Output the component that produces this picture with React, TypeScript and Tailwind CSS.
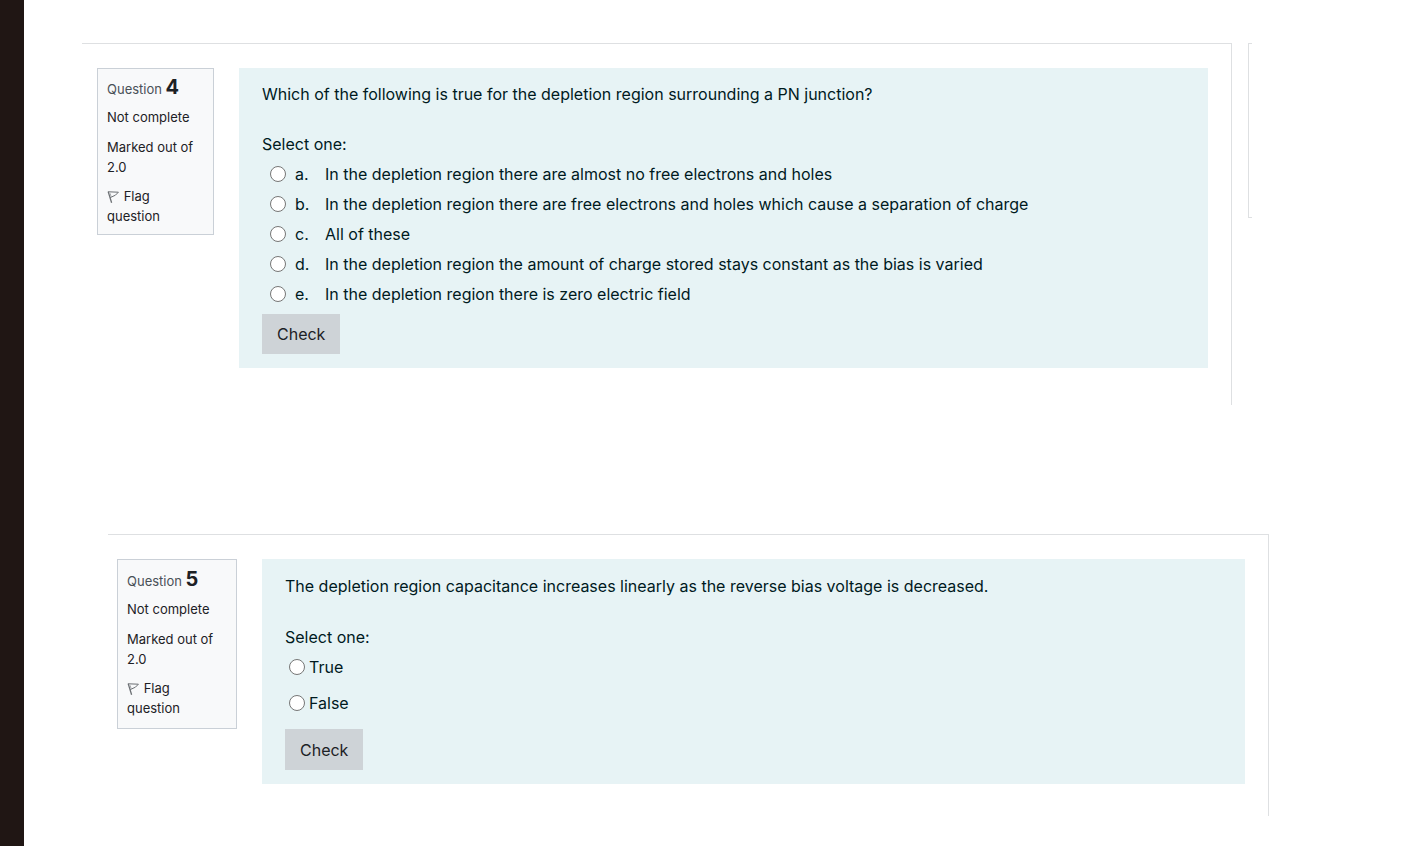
import React from "react";

type Option = { value: string; letter?: string; text: string };

type Question = {
  number: number;
  prompt: string;
  options: Option[];
};

const depletionQuestion: Question = {
  number: 4,
  prompt:
    "Which of the following is true for the depletion region surrounding a PN junction?",
  options: [
    {
      value: "a",
      letter: "a.",
      text: "In the depletion region there are almost no free electrons and holes",
    },
    {
      value: "b",
      letter: "b.",
      text: "In the depletion region there are free electrons and holes which cause a separation of charge",
    },
    { value: "c", letter: "c.", text: "All of these" },
    {
      value: "d",
      letter: "d.",
      text: "In the depletion region the amount of charge stored stays constant as the bias is varied",
    },
    {
      value: "e",
      letter: "e.",
      text: "In the depletion region there is zero electric field",
    },
  ],
};

const capacitanceQuestion: Question = {
  number: 5,
  prompt:
    "The depletion region capacitance increases linearly as the reverse bias voltage is decreased.",
  options: [
    { value: "true", text: "True" },
    { value: "false", text: "False" },
  ],
};

const FlagIcon: React.FC = () => (
  <svg
    viewBox="0 0 13 14"
    className="inline-block h-[14px] w-[13px] align-[-3px]"
    fill="none"
    stroke="#6b6f73"
    strokeLinejoin="round"
    aria-hidden="true"
  >
    <path d="M1.2 1.6 4.6 12.8" strokeWidth="1.3" />
    <path d="M1.2 1.8 11.4 2.2 8.4 5.2 3.2 7.6" strokeWidth="1" />
    <path d="M3 3.2 4.2 6.8" strokeWidth="0.9" stroke="#9a9da0" />
  </svg>
);

const InfoBox: React.FC<{ number: number; className: string }> = ({
  number,
  className,
}) => (
  <div
    className={`shrink-0 self-start border border-[#cad0d7] bg-[#f8f9fa] px-[9px] text-[13px] leading-5 text-[#1d2125] ${className}`}
  >
    <h3 className="leading-6 text-[#495057]">
      Question{" "}
      <span className="text-xl leading-6 font-bold text-[#1d2125]">
        {number}
      </span>
    </h3>
    <div className="mt-[6px]">Not complete</div>
    <div className="mt-[10px]">Marked out of 2.0</div>
    <a href="#flag" className="mt-[9px] block pr-3">
      <FlagIcon /> Flag question
    </a>
  </div>
);

const QuestionForm: React.FC<{ question: Question }> = ({ question }) => {
  const lettered = question.options.some((o) => o.letter);
  const name = `question-${question.number}`;

  return (
    <form
      className={[
        "min-w-0 flex-1 bg-[#e7f3f5] px-[23px] pb-[14px] text-base text-[#001a1e]",
        lettered ? "pt-3" : "pt-[13px]",
      ].join(" ")}
      onSubmit={(e) => e.preventDefault()}
    >
      <p className="leading-7">{question.prompt}</p>
      <fieldset className={lettered ? "mt-[21px]" : "mt-[22px]"}>
        <legend className="leading-[30px]">Select one:</legend>
        <div
          className={lettered ? "pl-2" : "flex flex-col gap-[6px] pl-1"}
        >
          {question.options.map((o) => (
            <label
              key={o.value}
              className={[
                "flex items-center leading-[30px]",
                lettered ? "gap-[9px]" : "gap-1",
              ].join(" ")}
            >
              <input
                type="radio"
                name={name}
                value={o.value}
                className="size-4 shrink-0 appearance-none rounded-full border border-[#767676] bg-white checked:border-4 checked:border-[#0f6cbf]"
              />
              {o.letter && <span className="w-[21px]">{o.letter}</span>}
              <span>{o.text}</span>
            </label>
          ))}
        </div>
      </fieldset>
      <button
        type="submit"
        className={[
          "bg-[#ced3d7] px-[15px] text-[#1d2125]",
          lettered ? "mt-[5px] h-10" : "mt-[11px] h-[41px]",
        ].join(" ")}
      >
        Check
      </button>
    </form>
  );
};

const App: React.FC = () => {
  return (
    <div className="flex min-h-screen bg-white font-['Inter',sans-serif]">
      <div className="w-6 shrink-0 bg-[#201614]" />

      <main className="min-w-0 flex-1">
        <div className="flex items-start gap-4 pt-[43px] pr-[154px] pl-[58px]">
          <section
            className="flex min-w-0 flex-1 gap-[25px] border-t border-r border-[#dee0e2] pt-6 pr-[23px] pb-[37px] pl-[15px]"
            aria-label="Question 4"
          >
            <InfoBox number={4} className="w-[117px] pt-[6px] pb-2" />
            <QuestionForm question={depletionQuestion} />
          </section>
          {/* edge of the side drawer */}
          <div className="h-[175px] w-1 shrink-0 border-y border-l border-[#dee0e2]" />
        </div>

        <div className="mt-[129px] pr-[137px] pl-[84px]">
          <section
            className="flex gap-[25px] border-t border-r border-[#dee0e2] pt-6 pr-[23px] pb-8 pl-[9px]"
            aria-label="Question 5"
          >
            <InfoBox number={5} className="w-[120px] pt-[7px] pb-[10px]" />
            <QuestionForm question={capacitanceQuestion} />
          </section>
        </div>
      </main>
    </div>
  );
};

export default App;
